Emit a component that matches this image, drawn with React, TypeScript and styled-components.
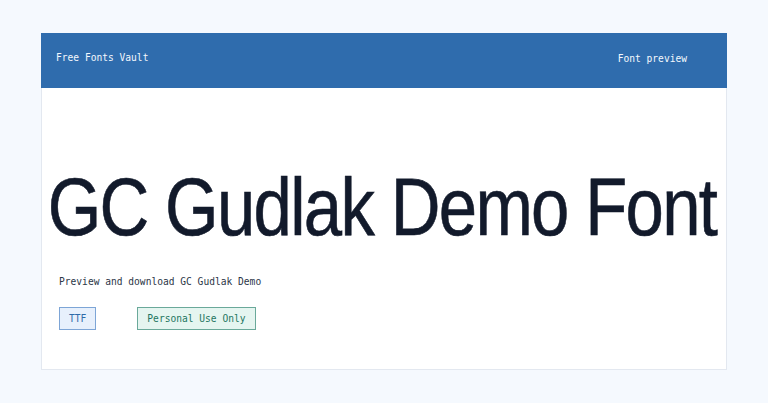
import React from "react";
import styled, { createGlobalStyle } from "styled-components";

const GlobalStyle = createGlobalStyle`
    html, body {
        margin: 0;
        padding: 0;
        background-color: #f5f9fe;
    }
    body {
        font-family: "DejaVu Sans Mono", "Liberation Mono", monospace;
    }
`

type Tone = "blue" | "green";

const tones: Record<Tone, { bg: string; border: string; color: string }> = {
    blue: { bg: "#e7f0fc", border: "#7da5d6", color: "#2f6aa8" },
    green: { bg: "#e5f5f0", border: "#6aa99a", color: "#1e7560" },
};

function App(): React.ReactElement {
    return (
        <Page>
            <GlobalStyle />
            <Card>
                <Header>
                    <Brand>Free Fonts Vault</Brand>
                    <Nav>Font preview</Nav>
                </Header>
                <Body>
                    <Title>
                        <TitleText>GC Gudlak Demo Font</TitleText>
                    </Title>
                    <Desc>Preview and download GC Gudlak Demo</Desc>
                    <Tags>
                        <Tag $tone="blue">TTF</Tag>
                        <Tag $tone="green">Personal Use Only</Tag>
                    </Tags>
                </Body>
            </Card>
        </Page>
    )
}

const Page = styled.div`
    width: 768px;
    height: 403px;
    padding: 33px 41px;
    box-sizing: border-box;
`

const Card = styled.div`
    width: 686px;
    height: 337px;
    box-sizing: border-box;
    background-color: #ffffff;
    border: 1px solid #e3e8f0;
    border-top: none;
    display: flex;
    flex-direction: column;
`

const Header = styled.div`
    height: 55px;
    margin: 0 -1px;
    background-color: #2f6cad;
    display: flex;
    align-items: center;
    justify-content: space-between;
    padding: 0 40px 0 15px;
    color: #f4f8fd;
    font-size: 9.6px;
`

const Brand = styled.div`
    margin-top: -7px;
`

const Nav = styled.div`
    margin-top: -5px;
`

const Body = styled.div`
    display: flex;
    flex-direction: column;
    padding: 0 17px;
`

// the heading is wider than the card, so it is centred and let overflow both sides
const Title = styled.h1`
    margin: 78px 0 0;
    display: flex;
    justify-content: center;
    font-family: "Liberation Sans", Arial, sans-serif;
    font-weight: 400;
    font-size: 82px;
    line-height: 82px;
    color: #121a2b;
    white-space: nowrap;
`

const TitleText = styled.span`
    display: inline-block;
    flex-shrink: 0;
    letter-spacing: -2px;
    transform: translateX(-2px) scaleX(0.84);
    transform-origin: center;
    -webkit-text-stroke: 0.6px #121a2b;
`

const Desc = styled.p`
    margin: 28px 0 0;
    font-size: 9.6px;
    line-height: 12px;
    color: #2c3647;
`

const Tags = styled.div`
    display: flex;
    gap: 41px;
    margin-top: 19px;
`

const Tag = styled.span<{ $tone: Tone }>`
    display: inline-block;
    padding: 5px 9px;
    font-size: 9.6px;
    line-height: 11px;
    background-color: ${p => tones[p.$tone].bg};
    border: 1px solid ${p => tones[p.$tone].border};
    color: ${p => tones[p.$tone].color};
`

export default App;
